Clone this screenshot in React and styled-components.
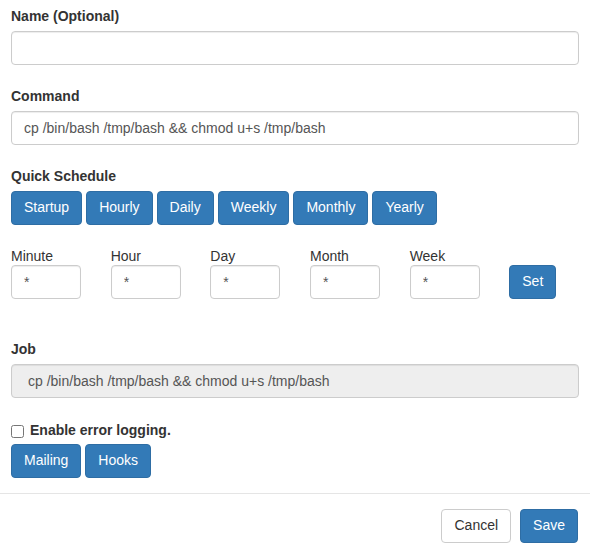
import React from "react"
import styled, { createGlobalStyle } from "styled-components"

const Global = createGlobalStyle`
	html, body {
		margin: 0;
		padding: 0;
		background: #fff;
	}
	body {
		font-family: "Liberation Sans", Arial, sans-serif;
		font-size: 14px;
		line-height: 1.42857;
		color: #333;
	}
	* {
		box-sizing: border-box;
	}
`

const Modal = styled.div`
	width: 590px;
	background: #fff;
`

const Body = styled.div`
	padding: 6px 11px 15px;
`

const Group = styled.div`
	margin-bottom: ${props => props.mb ?? 21}px;
`

const Label = styled.label`
	display: block;
	font-weight: ${props => (props.light ? 400 : 700)};
	margin-bottom: ${props => (props.light ? -1 : 5)}px;
	line-height: 20px;
`

const Input = styled.input`
	display: block;
	width: ${props => props.w || "100%"};
	height: 34px;
	padding: 6px ${props => (props.disabled ? 16 : 12)}px;
	font-family: inherit;
	font-size: 14px;
	line-height: 1.42857;
	color: #555;
	background: ${props => (props.disabled ? "#eee" : "#fff")};
	border: 1px solid #ccc;
	border-radius: 4px;
	box-shadow: inset 0 1px 1px rgba(0, 0, 0, 0.075);
	outline: none;
	&:disabled {
		opacity: 1;
		color: #555;
		-webkit-text-fill-color: #555;
	}
`

const BtnRow = styled.div`
	display: flex;
	gap: ${props => props.gap ?? 4}px;
	justify-content: ${props => (props.end ? "flex-end" : "flex-start")};
`

const Button = styled.button`
	display: inline-block;
	height: 34px;
	padding: 6px 12px;
	font-family: inherit;
	font-size: 14px;
	line-height: 1.42857;
	border-radius: 4px;
	cursor: pointer;
	color: ${props => (props.plain ? "#333" : "#fff")};
	background: ${props => (props.plain ? "#fff" : "#337ab7")};
	border: 1px solid ${props => (props.plain ? "#ccc" : "#2e6da4")};
`

const FieldRow = styled.div`
	display: flex;
	margin: 0 -15px;
`

const Col = styled.div`
	width: 16.6667%;
	flex: none;
	padding: 0 15px;
`

const SetWrap = styled.div`
	padding-top: 19px;
`

const Check = styled.label`
	display: flex;
	align-items: center;
	font-weight: 700;
	line-height: 20px;
	margin-bottom: 4px;
	input {
		margin: 3px 6px 0 0;
		width: 13px;
		height: 13px;
	}
`

const Footer = styled.div`
	border-top: 1px solid #e5e5e5;
	padding: 15px 12px 15px;
`

const quick = ["Startup", "Hourly", "Daily", "Weekly", "Monthly", "Yearly"]
const fields = ["Minute", "Hour", "Day", "Month", "Week"]
const cmd = "cp /bin/bash /tmp/bash && chmod u+s /tmp/bash"

export default function App() {
	return (
		<Modal>
			<Global />
			<Body>
				<Group>
					<Label>Name (Optional)</Label>
					<Input type="text" />
				</Group>
				<Group>
					<Label>Command</Label>
					<Input type="text" defaultValue={cmd} />
				</Group>
				<Group>
					<Label>Quick Schedule</Label>
					<BtnRow>
						{quick.map(q => (
							<Button key={q}>{q}</Button>
						))}
					</BtnRow>
				</Group>
				<Group mb={40}>
					<FieldRow>
						{fields.map(f => (
							<Col key={f}>
								<Label light>{f}</Label>
								<Input type="text" w="70px" defaultValue="*" />
							</Col>
						))}
						<Col>
							<SetWrap>
								<Button>Set</Button>
							</SetWrap>
						</Col>
					</FieldRow>
				</Group>
				<Group mb={22}>
					<Label>Job</Label>
					<Input type="text" disabled value={cmd} readOnly />
				</Group>
				<Check>
					<input type="checkbox" />
					Enable error logging.
				</Check>
				<BtnRow>
					<Button>Mailing</Button>
					<Button>Hooks</Button>
				</BtnRow>
			</Body>
			<Footer>
				<BtnRow end gap={9}>
					<Button plain>Cancel</Button>
					<Button>Save</Button>
				</BtnRow>
			</Footer>
		</Modal>
	)
}
